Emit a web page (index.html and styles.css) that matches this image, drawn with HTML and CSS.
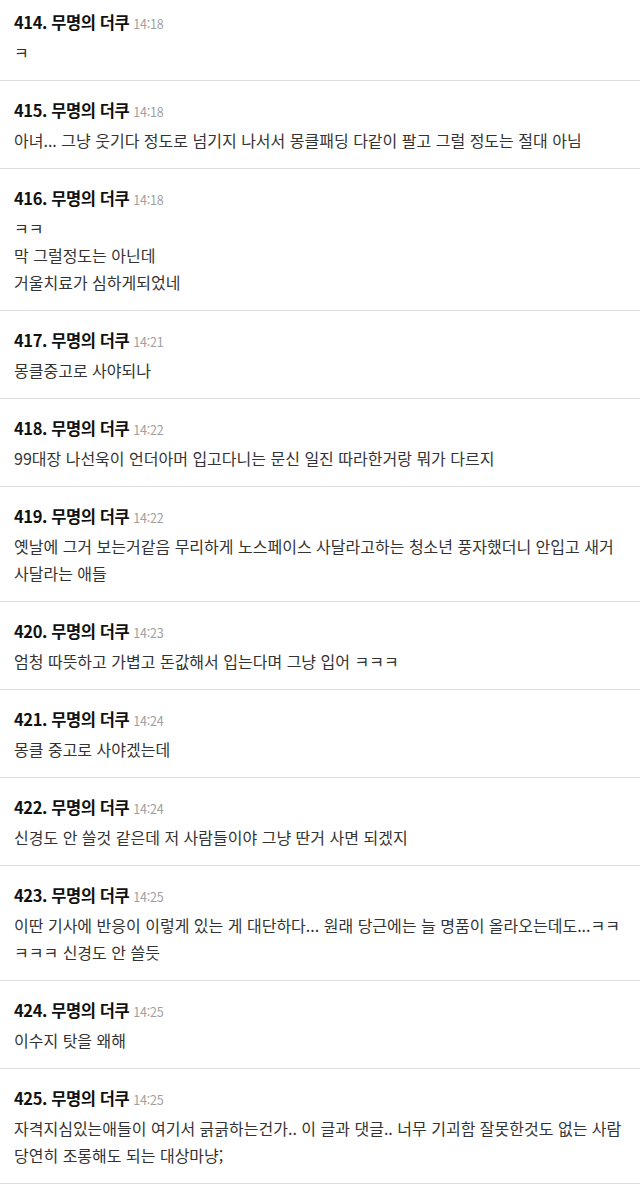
FILE: index.html
```html
<!DOCTYPE html>
<html lang="ko">
<head>
<meta charset="utf-8">
<link rel="stylesheet" href="styles.css">
</head>
<body>
<div class="list">
  <div class="item">
    <div class="head"><span class="name">414. 무명의 더쿠</span><span class="time">14:18</span></div>
    <div class="body">ㅋ</div>
  </div>
  <div class="item">
    <div class="head"><span class="name">415. 무명의 더쿠</span><span class="time">14:18</span></div>
    <div class="body">아녀... 그냥 웃기다 정도로 넘기지 나서서 몽클패딩 다같이 팔고 그럴 정도는 절대 아님</div>
  </div>
  <div class="item">
    <div class="head"><span class="name">416. 무명의 더쿠</span><span class="time">14:18</span></div>
    <div class="body">ㅋㅋ<br>막 그럴정도는 아닌데<br>거울치료가 심하게되었네</div>
  </div>
  <div class="item">
    <div class="head"><span class="name">417. 무명의 더쿠</span><span class="time">14:21</span></div>
    <div class="body">몽클중고로 사야되나</div>
  </div>
  <div class="item">
    <div class="head"><span class="name">418. 무명의 더쿠</span><span class="time">14:22</span></div>
    <div class="body">99대장 나선욱이 언더아머 입고다니는 문신 일진 따라한거랑 뭐가 다르지</div>
  </div>
  <div class="item">
    <div class="head"><span class="name">419. 무명의 더쿠</span><span class="time">14:22</span></div>
    <div class="body">옛날에 그거 보는거같음 무리하게 노스페이스 사달라고하는 청소년 풍자했더니 안입고 새거<br>사달라는 애들</div>
  </div>
  <div class="item">
    <div class="head"><span class="name">420. 무명의 더쿠</span><span class="time">14:23</span></div>
    <div class="body">엄청 따뜻하고 가볍고 돈값해서 입는다며 그냥 입어 ㅋㅋㅋ</div>
  </div>
  <div class="item">
    <div class="head"><span class="name">421. 무명의 더쿠</span><span class="time">14:24</span></div>
    <div class="body">몽클 중고로 사야겠는데</div>
  </div>
  <div class="item">
    <div class="head"><span class="name">422. 무명의 더쿠</span><span class="time">14:24</span></div>
    <div class="body">신경도 안 쓸것 같은데 저 사람들이야 그냥 딴거 사면 되겠지</div>
  </div>
  <div class="item">
    <div class="head"><span class="name">423. 무명의 더쿠</span><span class="time">14:25</span></div>
    <div class="body">이딴 기사에 반응이 이렇게 있는 게 대단하다... 원래 당근에는 늘 명품이 올라오는데도...ㅋㅋ<br>ㅋㅋㅋ 신경도 안 쓸듯</div>
  </div>
  <div class="item">
    <div class="head"><span class="name">424. 무명의 더쿠</span><span class="time">14:25</span></div>
    <div class="body">이수지 탓을 왜해</div>
  </div>
  <div class="item">
    <div class="head"><span class="name">425. 무명의 더쿠</span><span class="time">14:25</span></div>
    <div class="body">자격지심있는애들이 여기서 긁긁하는건가.. 이 글과 댓글.. 너무 기괴함 잘못한것도 없는 사람<br>당연히 조롱해도 되는 대상마냥;</div>
  </div>
</div>
</body>
</html>
```

FILE: styles.css
```css
html, body {
  margin: 0;
  padding: 0;
  background: #ffffff;
}

body {
  width: 640px;
  height: 1184px;
  overflow: hidden;
  font-family: "Noto Sans CJK KR", "Noto Sans", sans-serif;
  color: #333333;
}

.list {
  display: flex;
  flex-direction: column;
}

.item {
  padding: 16px 14px 14px;
  border-bottom: 1px solid #dedede;
}

.item:first-child {
  padding-top: 9px;
}

.head {
  display: flex;
  align-items: baseline;
  gap: 4px;
  height: 26px;
  line-height: 26px;
}

.name {
  font-size: 16.5px;
  font-weight: 700;
  color: #111111;
  letter-spacing: -0.4px;
}

.time {
  font-size: 12.5px;
  color: #a0a0a0;
  letter-spacing: -0.2px;
}

.body {
  margin-top: 4px;
  font-size: 16px;
  line-height: 27px;
  color: #333333;
}
```
